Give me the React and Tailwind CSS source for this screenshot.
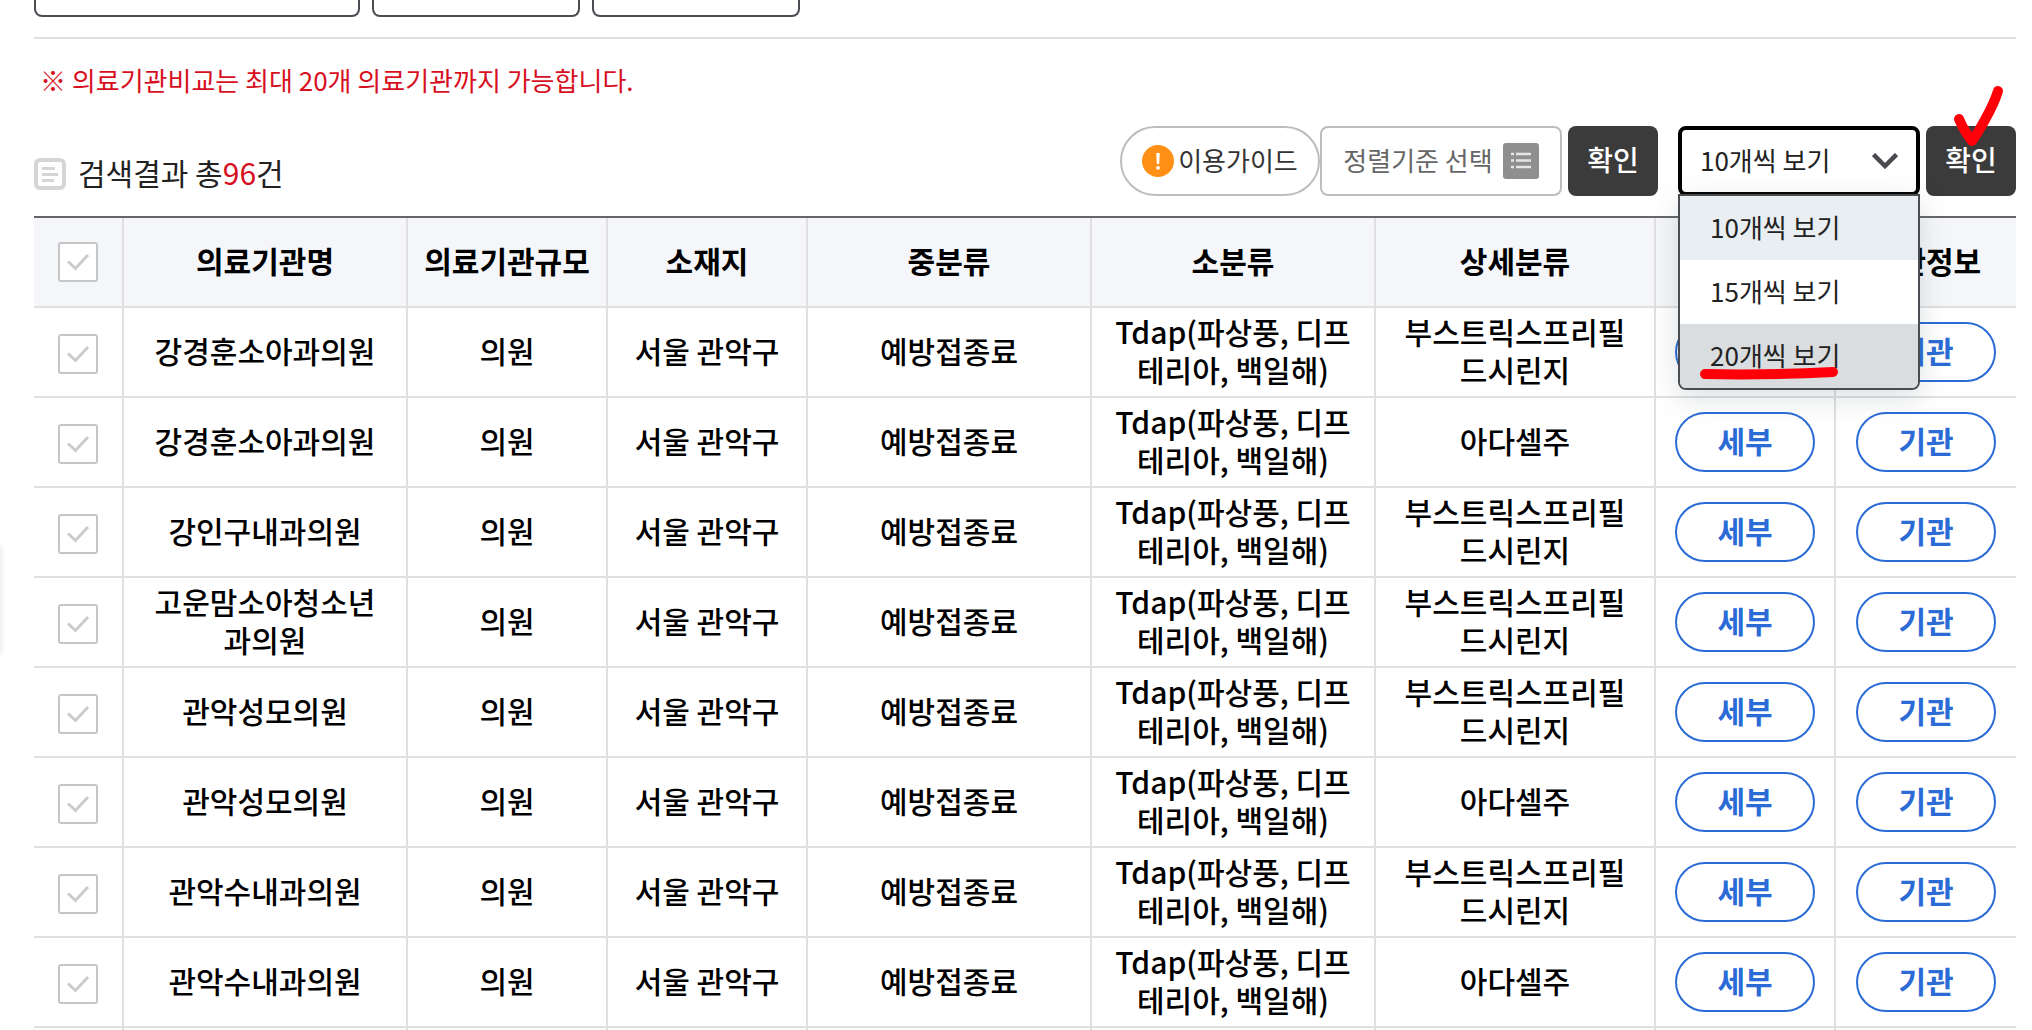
import { useState } from "react";

const columns = [
  { label: "의료기관명", width: "w-[284px]" },
  { label: "의료기관규모", width: "w-[200px]" },
  { label: "소재지", width: "w-[200px]" },
  { label: "중분류", width: "w-[284px]" },
  { label: "소분류", width: "w-[284px]" },
  { label: "상세분류", width: "w-[280px]" },
  { label: "세부정보", width: "w-[180px]" },
  { label: "기관정보", width: "w-[180px]" },
];

const BOOSTRIX = ["부스트릭스프리필", "드시린지"];
const ADACEL = ["아다셀주"];

const hospitals = [
  { id: 1, name: ["강경훈소아과의원"], detail: BOOSTRIX },
  { id: 2, name: ["강경훈소아과의원"], detail: ADACEL },
  { id: 3, name: ["강인구내과의원"], detail: BOOSTRIX },
  { id: 4, name: ["고운맘소아청소년", "과의원"], detail: BOOSTRIX },
  { id: 5, name: ["관악성모의원"], detail: BOOSTRIX },
  { id: 6, name: ["관악성모의원"], detail: ADACEL },
  { id: 7, name: ["관악수내과의원"], detail: BOOSTRIX },
  { id: 8, name: ["관악수내과의원"], detail: ADACEL },
];

const pageSizes = [10, 15, 20];

function Lines({ items }) {
  return items.map((line) => (
    <span key={line} className="block whitespace-nowrap">{line}</span>
  ));
}

function CheckBox({ label }) {
  return (
    <label className="relative mx-auto block size-10">
      <input
        type="checkbox"
        aria-label={label}
        className="block size-10 appearance-none rounded-[3px] border-2 border-[#c4c6c8] bg-white"
      />
      <svg viewBox="0 0 40 40" className="pointer-events-none absolute inset-0 size-10">
        <path d="M10 19.5 L17.5 26.5 L30 13" fill="none" stroke="#c9cbcd" strokeWidth="3" />
      </svg>
    </label>
  );
}

function Cell({ children, className = "pb-1" }) {
  return (
    <td className={`h-[90px] border-r-2 border-b-2 border-[#e0e0e0] text-center last:border-r-0 ${className}`}>
      {children}
    </td>
  );
}

function PillButton({ children }) {
  return (
    <button
      type="button"
      className="mx-auto flex h-[60px] w-[140px] items-center justify-center rounded-full border-2 border-[#2b6bd6] bg-white pb-1 text-[30px] font-bold text-[#2b6bd6]"
    >
      {children}
    </button>
  );
}

function ConfirmButton({ children }) {
  return (
    <button
      type="button"
      className="relative h-[70px] w-[90px] rounded-lg bg-[#3b3b3b] pb-1 text-[28px] font-medium text-white"
    >
      확인
      {children}
    </button>
  );
}

function App() {
  const [pageSize, setPageSize] = useState(10);

  return (
    <div className="relative h-screen overflow-hidden bg-white pr-4 pl-[34px] font-['Noto_Sans_CJK_KR','Noto_Sans',sans-serif] text-black">

      {/* SIDE TAB SHADOW */}
      <div className="absolute top-[545px] -left-10 h-[110px] w-10 shadow-[0_0_6px_rgba(0,0,0,0.12)]" />

      {/* SEARCH BOXES */}
      <div className="flex gap-3">
        <div className="h-[17px] w-[326px] rounded-b-lg border-2 border-t-0 border-[#4b4b52]" />
        <div className="h-[17px] w-[208px] rounded-b-lg border-2 border-t-0 border-[#4b4b52]" />
        <div className="h-[17px] w-[208px] rounded-b-lg border-2 border-t-0 border-[#4b4b52]" />
      </div>
      <hr className="mt-5 border-t-2 border-[#e0e0e0]" />

      {/* NOTICE */}
      <p className="mt-[22px] pl-1.5 text-[26px] leading-[38px] text-[#d7101f]">
        ※ 의료기관비교는 최대 20개 의료기관까지 가능합니다.
      </p>

      {/* RESULT COUNT + TOOLBAR */}
      <div className="mt-[27px] flex items-end justify-between">
        <div className="flex h-11 items-center gap-3">
          <svg viewBox="0 0 32 32" className="size-8">
            <rect x="2" y="2" width="28" height="28" rx="4" fill="#fff" stroke="#d3d5d7" strokeWidth="4" />
            <path d="M8 10.5h13M8 16.5h16M8 22.5h12" stroke="#d3d5d7" strokeWidth="3" />
          </svg>
          <h2 className="pb-1 text-[30px] leading-[38px] text-[#222]">
            검색결과 총<span className="text-[#d7101f]">96</span>건
          </h2>
        </div>

        <div className="flex">
          <button
            type="button"
            className="flex h-[70px] w-[200px] items-center justify-center gap-1 rounded-full border-2 border-[#bdbdbd] text-[26px] text-[#333]"
          >
            <svg viewBox="0 0 32 32" className="size-8 shrink-0">
              <circle cx="16" cy="16" r="16" fill="#ff9015" />
              <path d="M14.2 8h3.6l-.6 11h-2.4z" fill="#fff" />
              <circle cx="16" cy="22.8" r="1.9" fill="#fff" />
            </svg>
            <span className="pb-1 whitespace-nowrap">이용가이드</span>
          </button>

          <button
            type="button"
            className="flex h-[70px] w-[242px] items-center justify-center gap-2.5 rounded-lg border-2 border-[#bdbdbd] text-[26px] text-[#666]"
          >
            <span className="pb-1 whitespace-nowrap">정렬기준 선택</span>
            <svg viewBox="0 0 36 36" className="size-9 shrink-0">
              <rect width="36" height="36" rx="3" fill="#8f8f8f" />
              <path d="M8 11h3M8 17.5h3M8 24h3M13 11h15M13 17.5h15M13 24h15" stroke="#e6e6e6" strokeWidth="2.4" />
            </svg>
          </button>

          <div className="ml-1.5">
            <ConfirmButton />
          </div>

          <div className="relative ml-5 w-[242px]">
            <select
              aria-label="페이지당 보기 개수"
              value={pageSize}
              onChange={(e) => setPageSize(Number(e.target.value))}
              className="h-[70px] w-full appearance-none rounded-lg border-4 border-black bg-white pr-12 pb-1 pl-[18px] text-[26px] text-[#222]"
            >
              {pageSizes.map((size) => (
                <option key={size} value={size}>{size}개씩 보기</option>
              ))}
            </select>
            <svg viewBox="0 0 26 16" className="pointer-events-none absolute top-[27px] right-[22px] h-4 w-[26px]">
              <path d="M1.5 1.5 L13 13 L24.5 1.5" fill="none" stroke="#4a4a4f" strokeWidth="4.5" />
            </svg>

            <ul
              role="listbox"
              className="absolute top-[68px] left-0 z-10 w-full overflow-hidden rounded-b-lg border-2 border-[#4b4c52] bg-white text-[26px] text-[#222] shadow-[0_8px_28px_rgba(60,75,90,0.18)]"
            >
              {pageSizes.map((size) => (
                <li
                  key={size}
                  role="option"
                  aria-selected={size === pageSize}
                  onClick={() => setPageSize(size)}
                  className="relative flex h-16 items-center pb-1 pl-[30px] first:bg-[#e9eef3] last:bg-[#dadde0]"
                >
                  {size}개씩 보기
                  {size === 20 && (
                    <svg viewBox="0 0 144 16" className="absolute bottom-[7px] left-[18px] h-4 w-36">
                      <path d="M7 9 C50 10 95 9 135 7" fill="none" stroke="#ff0008" strokeWidth="10" strokeLinecap="round" />
                    </svg>
                  )}
                </li>
              ))}
            </ul>
          </div>

          <div className="ml-1.5">
            <ConfirmButton>
              <svg viewBox="0 0 60 70" className="pointer-events-none absolute -top-[46px] left-6 h-[70px] w-[60px]">
                <path
                  d="M9 39 C12 46 17 55 22 61 C27 54 43 28 48 11"
                  fill="none"
                  stroke="#ff0008"
                  strokeWidth="10"
                  strokeLinecap="round"
                  strokeLinejoin="round"
                />
              </svg>
            </ConfirmButton>
          </div>
        </div>
      </div>

      {/* RESULT TABLE */}
      <table className="mt-5 w-full table-fixed border-separate border-spacing-0 border-t-2 border-[#666] text-[30px] leading-[38px] font-medium">
        <thead>
          <tr className="bg-[#f5f6f9]">
            <th className="h-[90px] w-[90px] border-r-2 border-b-2 border-[#e0e0e0] p-0">
              <CheckBox label="전체 선택" />
            </th>
            {columns.map((col) => (
              <th
                key={col.label}
                className={`h-[90px] border-r-2 border-b-2 border-[#e0e0e0] pb-1 font-bold whitespace-nowrap last:border-r-0 ${col.width}`}
              >
                {col.label}
              </th>
            ))}
          </tr>
        </thead>
        <tbody>
          {hospitals.map((row) => (
            <tr key={row.id}>
              <Cell className="pt-1"><CheckBox label={row.name.join("")} /></Cell>
              <Cell><Lines items={row.name} /></Cell>
              <Cell>의원</Cell>
              <Cell>서울 관악구</Cell>
              <Cell>예방접종료</Cell>
              <Cell><Lines items={["Tdap(파상풍, 디프", "테리아, 백일해)"]} /></Cell>
              <Cell><Lines items={row.detail} /></Cell>
              <Cell className="p-0"><PillButton>세부</PillButton></Cell>
              <Cell className="p-0"><PillButton>기관</PillButton></Cell>
            </tr>
          ))}
          <tr>
            <Cell />
            {columns.map((col) => (
              <Cell key={col.label} />
            ))}
          </tr>
        </tbody>
      </table>
    </div>
  );
}

export default App;
